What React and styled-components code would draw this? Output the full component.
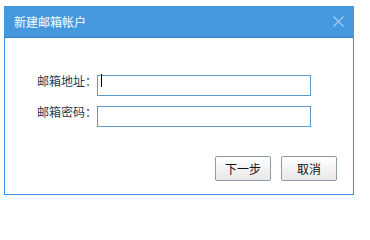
import React from "react";
import styled, { createGlobalStyle } from "styled-components";

const GlobalStyle = createGlobalStyle`
    html, body {
        margin: 0;
        padding: 0;
        background: #ffffff;
    }
    body {
        font-family: "Noto Sans CJK SC", "Liberation Sans", sans-serif;
    }
`;

const Page = styled.div`
    padding: 6px 0 0 4px;
`;

const Dialog = styled.div`
    width: 350px;
    height: 189px;
    box-sizing: border-box;
    border: 1px solid #3d8fdd;
    border-top: none;
    display: flex;
    flex-direction: column;
    background: #fff;
`;

const Header = styled.div`
    height: 31px;
    margin: 0 -1px;
    padding: 0 10px;
    background: #4598de;
    border-bottom: 1px solid #3a7fc2;
    display: flex;
    align-items: center;
    justify-content: space-between;
`;

const Title = styled.span`
    color: #fff;
    font-size: 12px;
    line-height: 1;
`;

const Close = styled.button`
    border: none;
    background: none;
    padding: 0;
    margin-right: 0;
    width: 12px;
    height: 12px;
    display: flex;
    align-items: center;
    justify-content: center;
    cursor: pointer;
`;

const Body = styled.div`
    flex: 1;
    display: flex;
    flex-direction: column;
    padding: 32px 16px 13px 32px;
`;

const Form = styled.div`
    display: flex;
    flex-direction: column;
    gap: 10px;
`;

const Row = styled.div`
    display: flex;
    align-items: center;
`;

const Label = styled.label`
    width: 60px;
    font-size: 12px;
    color: #1f3b52;
    white-space: nowrap;
`;

const Field = styled.div`
    position: relative;
    width: 214px;
    height: 21px;
`;

const Input = styled.input`
    width: 100%;
    height: 100%;
    box-sizing: border-box;
    border: 1px solid #5a9bcb;
    outline: none;
    padding: 0 4px;
    font-size: 12px;
`;

const Caret = styled.span`
    position: absolute;
    left: 4px;
    top: 4px;
    width: 1px;
    height: 13px;
    background: #000;
`;

const Footer = styled.div`
    margin-top: auto;
    display: flex;
    justify-content: flex-end;
    gap: 10px;
`;

const Button = styled.button`
    width: 56px;
    height: 25px;
    box-sizing: border-box;
    border: 1px solid #8b9cab;
    border-radius: 2px;
    background: linear-gradient(#ffffff, #e8e8e8);
    font-family: "Noto Sans CJK SC", "Liberation Sans", sans-serif;
    font-size: 12px;
    color: #111;
    padding: 0;
    cursor: pointer;
`;

const App = () => {
    return (
        <Page>
            <GlobalStyle />
            <Dialog>
                <Header>
                    <Title>新建邮箱帐户</Title>
                    <Close aria-label="关闭">
                        <svg width="11" height="11" viewBox="0 0 11 11">
                            <path d="M0.5 0.5 L10.5 10.5 M10.5 0.5 L0.5 10.5" stroke="#a9d1f3" strokeWidth="1.1" />
                        </svg>
                    </Close>
                </Header>
                <Body>
                    <Form>
                        <Row>
                            <Label>邮箱地址：</Label>
                            <Field>
                                <Input type="text" />
                                <Caret />
                            </Field>
                        </Row>
                        <Row>
                            <Label>邮箱密码：</Label>
                            <Field>
                                <Input type="password" />
                            </Field>
                        </Row>
                    </Form>
                    <Footer>
                        <Button>下一步</Button>
                        <Button>取消</Button>
                    </Footer>
                </Body>
            </Dialog>
        </Page>
    );
};

export default App;
